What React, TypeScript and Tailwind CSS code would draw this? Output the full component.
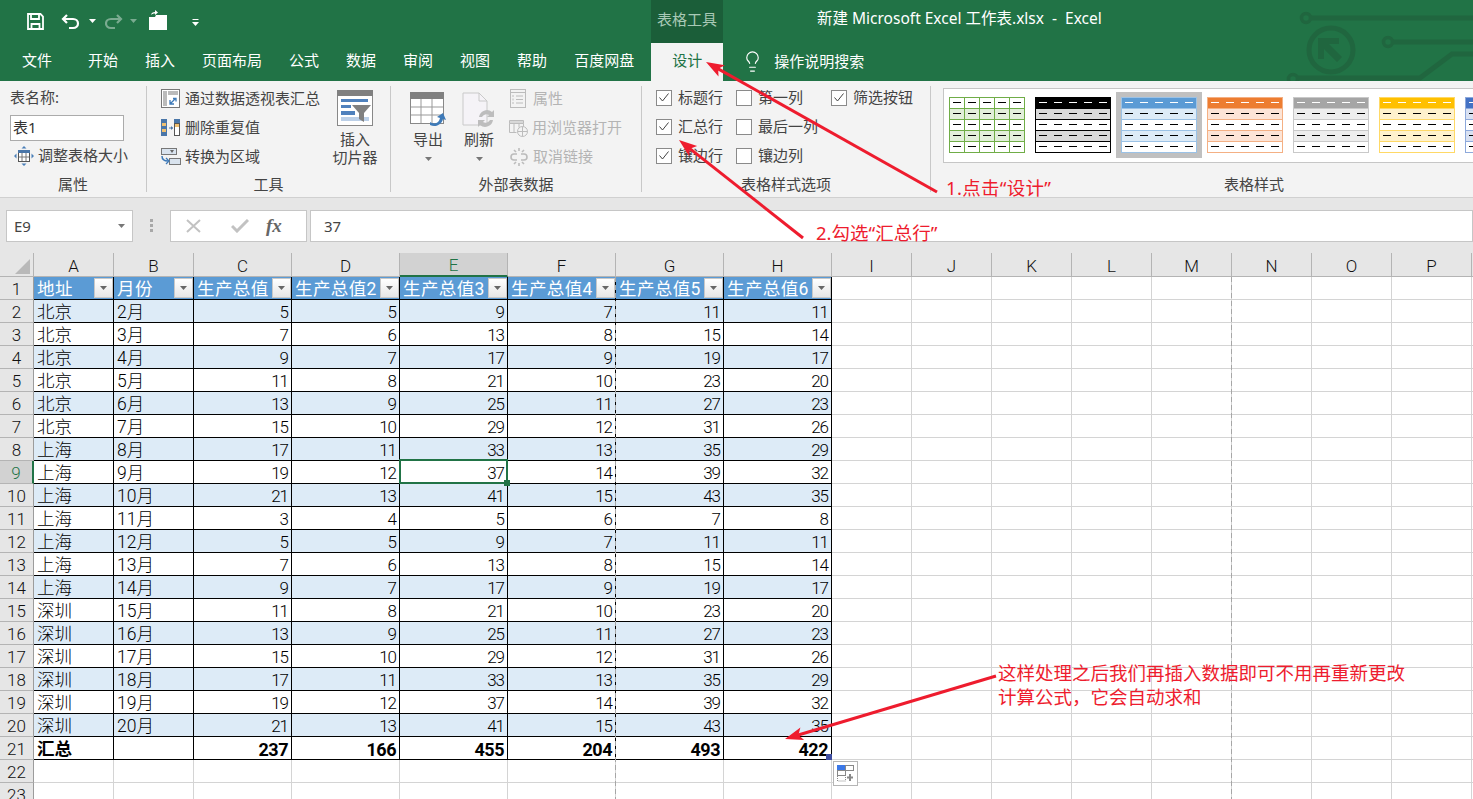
import React from "react";
import { Lightbulb } from "lucide-react";

const cjk = { fontFamily: '"Noto Sans","Noto Sans CJK SC",sans-serif' };
const cellFont = { fontFamily: 'Roboto,"Noto Sans CJK SC",sans-serif' };

const C = [5,7,9,11,13,15,17,19,21,3,5,7,9,11,13,15,17,19,21];
const D = [5,6,7,8,9,10,11,12,13,4,5,6,7,8,9,10,11,12,13];
const E = [9,13,17,21,25,29,33,37,41,5,9,13,17,21,25,29,33,37,41];
const F = [7,8,9,10,11,12,13,14,15,6,7,8,9,10,11,12,13,14,15];
const G = [11,15,19,23,27,31,35,39,43,7,11,15,19,23,27,31,35,39,43];
const H = [11,14,17,20,23,26,29,32,35,8,11,14,17,20,23,26,29,32,35];
const letters = ["A","B","C","D","E","F","G","H","I","J","K","L","M","N","O","P",""];
const blanks = ["i","j","k","l","m","n","o","p","q"];
const allCols = ["a","b","c","d","e","f","g","h",...blanks];
const heads = ["地址","月份","生产总值","生产总值2","生产总值3","生产总值4","生产总值5","生产总值6"];
const totals = ["237","166","455","204","493","422"];
const tabs = ["开始","插入","页面布局","公式","数据","审阅","视图","帮助","百度网盘"];

function Caret({ color = "#fff" }: { color?: string }) {
  return <svg width="7" height="4" viewBox="0 0 7 4"><path d="M0 0h7L3.500 4z" fill={color} /></svg>;
}

function Qat() {
  return (
    <div className="h-[43px] flex items-center pl-[27px]">
      <svg width="17" height="17" viewBox="0 0 17 17" fill="none" stroke="#fff" strokeWidth="1.8">
        <path d="M1 1h12.500L16 3.500V16H1z" /><path d="M4 1v5h8V1" /><path d="M4.500 16v-5h8v5" />
      </svg>
      <svg className="ml-[17px]" width="19" height="16" viewBox="0 0 19 16" fill="none" stroke="#fff" strokeWidth="2.2">
        <path d="M2 5h10c3 0 5 2 5 4.500S15 14 12 14H8" /><path d="M6 1 2 5l4 4" />
      </svg>
      <span className="ml-[9px] mb-[2px] flex"><Caret /></span>
      <svg className="ml-[9px] opacity-40" width="18" height="16" viewBox="0 0 18 16" fill="none" stroke="#fff" strokeWidth="2.2">
        <path d="M16 5H6C3 5 1 7 1 9.500S3 14 6 14h4" /><path d="m12 1 4 4-4 4" />
      </svg>
      <span className="ml-[7px] mb-[2px] flex opacity-40"><Caret /></span>
      <svg className="ml-[11px] -mt-[4px]" width="20" height="20" viewBox="0 0 20 20" fill="#fff">
        <path d="M1 7h6l1-2h11v15H1z" /><path d="M3 5c0-2 2-3 4-3V0l3 2.500L7 5V3.500C5 3.500 4 4 3 5z" />
      </svg>
      <svg className="ml-[24px] mt-[2px]" width="7" height="7" viewBox="0 0 7 7" fill="#fff">
        <rect width="6" height="1" x="0.500" /><path d="M0 3h7L3.500 7z" />
      </svg>
    </div>
  );
}

function TitleBar() {
  return (
    <div className="relative h-[81px] bg-[#217346] text-white overflow-hidden" style={cjk}>
      <svg className="absolute left-[1280px] top-0" width="193" height="81" viewBox="1280 0 193 81" fill="none" stroke="#20663f" strokeWidth="5">
        <circle cx="1306" cy="18" r="4.500" strokeWidth="3.500" /><path d="M1311 18h162" />
        <circle cx="1331" cy="50" r="22" />
        <path d="M1318 38h21v6h-10l13 13-5 5-13-13v10h-6z" fill="#20663f" stroke="none" />
        <circle cx="1388" cy="42" r="4.500" strokeWidth="3.500" /><path d="M1393 42h80" />
        <circle cx="1293" cy="79" r="4.500" strokeWidth="3.500" /><path d="M1298 78h122l32-24h21" />
      </svg>
      <div className="absolute left-[651px] top-0 w-[72px] h-[43px] pb-[4px] bg-[#1b5e39] text-[#a9c9b6] text-[15px] flex items-center justify-center">表格工具</div>
      <div className="absolute left-[817px] top-0 h-[37px] flex items-center text-[15.500px] whitespace-pre">新建 Microsoft Excel 工作表.xlsx  -  Excel</div>
      <Qat />
      <div className="h-[38px] flex items-stretch text-[15px]">
        <div className="ml-[22px] w-[30px] pb-[4px] flex items-center justify-center whitespace-nowrap">文件</div>
        <div className="flex ml-[36px] gap-[27px]">
          {tabs.map((t) => <div key={t} className="flex items-center pb-[4px] whitespace-nowrap">{t}</div>)}
        </div>
        <div className="ml-[17px] w-[72px] pb-[4px] bg-[#f3f3f3] text-[#217346] flex items-center justify-center">设计</div>
        <Lightbulb className="ml-[18px] mb-[2px] self-center" size={23} strokeWidth={1.2} />
        <div className="ml-[10px] pb-[2px] flex items-center whitespace-nowrap">操作说明搜索</div>
      </div>
    </div>
  );
}

function Divider() {
  return <div className="w-px my-[5px] bg-[#c8c8c8] shrink-0" />;
}

function Group({ w, label, children }: { w: string; label: string; children: React.ReactNode }) {
  return (
    <div className={`${w} shrink-0 h-full flex flex-col`}>
      <div className="pt-[2px] h-[94px]">{children}</div>
      <div className="h-[22px] pb-[3px] flex items-center justify-center text-[15px] text-[#444]">{label}</div>
    </div>
  );
}

function PivotIcon() {
  return (
    <svg width="19" height="19" viewBox="0 0 19 19" fill="none">
      <rect x="0.500" y="0.500" width="18" height="18" fill="#fff" stroke="#777" />
      <path d="M2 2h4v15H2zM7 2h10v4H7z" fill="#bbb" />
      <path d="M9 15l5-5M12 9.500h3v3M9 11v4h4" stroke="#3e7ab8" strokeWidth="1.300" />
    </svg>
  );
}
function DupIcon() {
  return (
    <svg width="19" height="18" viewBox="0 0 19 18" fill="none">
      <rect width="6" height="17" fill="#4a76a8" /><rect x="1" y="4" width="4" height="3" fill="#f0c070" /><rect x="1" y="10" width="4" height="3" fill="#f0c070" />
      <rect x="13" width="6" height="4" fill="#4a76a8" /><rect x="13.500" y="4.500" width="5" height="12" fill="#fff" stroke="#555" /><rect x="14" y="5" width="4" height="3" fill="#f0c070" />
      <path d="M8 9h4" stroke="#4a76a8" /><path d="M10 7l2 2-2 2" fill="#4a76a8" />
    </svg>
  );
}
function ConvertIcon() {
  return (
    <svg width="20" height="18" viewBox="0 0 20 18" fill="none">
      <rect x="0.500" y="0.500" width="15" height="6" fill="#d9e3ee" stroke="#777" /><path d="M9 2h4l-2 3z" fill="#666" />
      <rect x="8.500" y="10.500" width="11" height="6" fill="#d9e3ee" stroke="#777" />
      <path d="M1 8c0 4 2 5 6 5" stroke="#3e7ab8" strokeWidth="1.500" /><path d="M5 10l3 3-3 3" stroke="#3e7ab8" strokeWidth="1.300" />
    </svg>
  );
}
function ResizeIcon() {
  return (
    <svg width="20" height="20" viewBox="0 0 20 20" fill="none">
      <rect x="4.500" y="4.500" width="11" height="11" fill="#fff" stroke="#555" />
      <rect x="4" y="4" width="12" height="3" fill="#4a76a8" />
      <path d="M8 7v8M12 7v8M5 11h10" stroke="#777" />
      <path d="M10 0l2.500 2.500h-5zM10 20l2.500-2.500h-5zM0 10l2.500-2.500v5zM20 10l-2.500-2.500v5z" fill="#4a7fb8" />
    </svg>
  );
}
function SlicerIcon() {
  return (
    <svg width="36" height="36" viewBox="0 0 36 36" fill="none">
      <rect x="0.500" y="0.500" width="35" height="35" fill="#fff" stroke="#888" />
      <rect width="36" height="6" fill="#808080" />
      <rect x="4" y="9" width="27" height="3" fill="#4f81bd" /><rect x="4" y="15" width="10" height="3" fill="#4f81bd" />
      <rect x="4" y="21" width="14" height="4" fill="#4f81bd" /><rect x="4" y="27" width="28" height="4" fill="#bcd0e8" />
      <path d="M15 15h19l-7 8v9l-5-3v-6z" fill="#808080" />
    </svg>
  );
}
function ExportIcon() {
  return (
    <svg width="36" height="38" viewBox="0 0 36 38" fill="none">
      <rect x="0.500" y="0.500" width="33" height="31" fill="#fff" stroke="#888" />
      <rect width="34" height="7" fill="#808080" />
      <path d="M11 7v24M22 7v24M1 15h32M1 23h32" stroke="#999" />
      <path d="M20 30c5 3 9 1 10-4l-3-1 6-4 3 7-3-1c-1 5-7 9-13 6z" fill="#3e7ab8" />
    </svg>
  );
}
function RefreshIcon() {
  return (
    <svg width="34" height="38" viewBox="0 0 34 38" fill="none">
      <path d="M1 1h16l8 8v24H1z" fill="#f5f3f7" stroke="#c9c9c9" /><path d="M17 1v8h8" stroke="#c9c9c9" />
      <path d="M17 25a8 8 0 0 1 13-5l2-2v7h-7l2-2a5 5 0 0 0-7 2zM31 28a8 8 0 0 1-13 5l-2 2v-7h7l-2 2a5 5 0 0 0 7-2z" fill="#bdbdbd" />
    </svg>
  );
}
function PropIcon() {
  return (
    <svg width="16" height="19" viewBox="0 0 16 19" fill="none" stroke="#bcbcbc">
      <rect x="0.500" y="0.500" width="15" height="18" /><path d="M0 3.500h16M6 7h7M6 10.500h7M6 14h7M3 6v2M3 9.500v2M3 13v2" />
    </svg>
  );
}
function BrowserIcon() {
  return (
    <svg width="19" height="18" viewBox="0 0 19 18" fill="none" stroke="#bcbcbc">
      <path d="M0.500 3h14M0.500 1.500h14v3h-14zM0.500 4.500v9h7M5 4.500v9M10 4.500v4M14.500 4.500v3" />
      <circle cx="13.500" cy="12.500" r="5" /><path d="M8.500 12.500h10M13.500 7.500v10" />
    </svg>
  );
}
function UnlinkIcon() {
  return (
    <svg width="18" height="18" viewBox="0 0 18 18" fill="none" stroke="#bcbcbc" strokeWidth="1.600">
      <path d="M7 6H4a3 3 0 0 0 0 6h3M11 6h3a3 3 0 0 1 0 6h-3M9 0v3M9 15v3M4 2l2 2M14 2l-2 2M4 16l2-2M14 16l-2-2" />
    </svg>
  );
}

function Check({ on, label }: { on: boolean; label: string }) {
  return (
    <div className="h-[29px] flex items-center">
      <div className="w-[16px] h-[16px] bg-white border border-[#8a8a8a] flex items-center justify-center shrink-0">
        {on && <svg width="10" height="9" viewBox="0 0 10 9" fill="none" stroke="#444"><path d="M0.500 4.500 3.500 8 9.500 0.500" /></svg>}
      </div>
      <span className="ml-[6px] whitespace-nowrap">{label}</span>
    </div>
  );
}

function Thumb({ head, band, line, grid, ring }: { head: string; band: string; line: string; grid?: boolean; ring?: boolean }) {
  const rows = [0, 1, 2, 3, 4];
  const cols = [0, 1, 2, 3, 4];
  return (
    <div className={`shrink-0 w-[76px] h-[56px] ${ring ? "ring-[5px] ring-[#c0c0c0]" : ""}`}>
      <svg width="76" height="56" viewBox="0 0 76 56" className="block">
        {rows.map((r) => (
          <rect key={r} x="0" y={r * 11} width="76" height="11.200" fill={r === 0 ? head : r % 2 === 1 ? band : "#fff"} />
        ))}
        {rows.slice(1).map((r) => <path key={r} d={`M0 ${r * 11 + 0.5}h76`} stroke={line} />)}
        {grid && [1, 2, 3, 4].map((c) => <path key={c} d={`M${c * 15 + 0.5} 0v56`} stroke={line} />)}
        <rect x="0.500" y="0.500" width="75" height="55" fill="none" stroke={line} />
        {rows.map((r) => cols.map((c) => (
          <path key={c} d={`M${4 + c * 15} ${r * 11 + 5.5}h8`} stroke={r === 0 && !grid ? "#fff" : "#000"} />
        )))}
      </svg>
    </div>
  );
}

function Ribbon() {
  return (
    <div className="h-[116px] flex bg-[#f3f3f3] text-[15px] text-[#444]" style={cjk}>
      <Group w="w-[146px]" label="属性">
        <div className="pl-[10px]">
          <div className="h-[29px] flex items-center">表名称:</div>
          <div className="h-[29px] flex items-center pt-[2px]">
            <div className="w-[114px] h-[26px] bg-white border border-[#ababab] flex items-center pl-[2px] text-[15px] text-[#333]">表1</div>
          </div>
          <div className="h-[29px] flex items-center pl-[4px] gap-[4px] whitespace-nowrap"><ResizeIcon />调整表格大小</div>
        </div>
      </Group>
      <Divider />
      <Group w="w-[243px]" label="工具">
        <div className="flex">
          <div className="w-[185px] pl-[14px] pt-px shrink-0">
            <div className="h-[29px] flex items-center gap-[5px] whitespace-nowrap"><PivotIcon />通过数据透视表汇总</div>
            <div className="h-[29px] flex items-center gap-[5px] whitespace-nowrap"><DupIcon />删除重复值</div>
            <div className="h-[29px] flex items-center gap-[4px] whitespace-nowrap"><ConvertIcon />转换为区域</div>
          </div>
          <div className="w-[46px] flex flex-col items-center pt-[7px] leading-[18px] whitespace-nowrap">
            <SlicerIcon />
            <span className="mt-[4px]">插入</span>
            <span>切片器</span>
          </div>
        </div>
      </Group>
      <Divider />
      <Group w="w-[250px]" label="外部表数据">
        <div className="flex">
          <div className="w-[72px] flex flex-col items-center pt-[9px] pl-[2px]">
            <ExportIcon />
            <span className="leading-[18px]">导出</span>
            <span className="mt-[9px] flex"><Caret color="#777" /></span>
          </div>
          <div className="w-[32px] flex flex-col items-center pt-[9px]">
            <RefreshIcon />
            <span className="leading-[18px] whitespace-nowrap">刷新</span>
            <span className="mt-[9px] flex"><Caret color="#777" /></span>
          </div>
          <div className="pl-[15px] pt-px text-[#b4b4b4]">
            <div className="h-[29px] flex items-center gap-[7px] whitespace-nowrap"><PropIcon />属性</div>
            <div className="h-[29px] flex items-center gap-[4px] -ml-px whitespace-nowrap"><BrowserIcon />用浏览器打开</div>
            <div className="h-[29px] flex items-center gap-[5px] whitespace-nowrap"><UnlinkIcon />取消链接</div>
          </div>
        </div>
      </Group>
      <Divider />
      <Group w="w-[288px]" label="表格样式选项">
        <div className="pl-[14px] grid grid-cols-[80px_95px_1fr]">
          <Check on label="标题行" />
          <Check on={false} label="第一列" />
          <Check on label="筛选按钮" />
          <Check on label="汇总行" />
          <Check on={false} label="最后一列" />
          <div />
          <Check on label="镶边行" />
          <Check on={false} label="镶边列" />
        </div>
      </Group>
      <Divider />
      <div className="w-[542px] shrink-0 h-full flex flex-col overflow-hidden">
        <div className="pt-[7px] pl-[12px] h-[94px]">
          <div className="w-[600px] h-[75px] bg-white border border-[#c6c6c6] flex gap-[10px] pl-[5px] pt-[8px]">
            <Thumb head="#ffffff" band="#e2efda" line="#70ad47" grid />
            <Thumb head="#000000" band="#d9d9d9" line="#000000" />
            <Thumb head="#5b9bd5" band="#ddebf7" line="#9bc2e6" ring />
            <Thumb head="#ed7d31" band="#fce4d6" line="#f4b084" />
            <Thumb head="#a5a5a5" band="#ededed" line="#c9c9c9" />
            <Thumb head="#ffc000" band="#fff2cc" line="#ffd966" />
            <Thumb head="#4472c4" band="#d9e1f2" line="#8ea9db" />
          </div>
        </div>
        <div className="h-[22px] pb-[3px] flex items-center justify-center text-[15px] pl-[104px]">表格样式</div>
      </div>
    </div>
  );
}

function FormulaBar() {
  return (
    <div className="h-[56px] bg-[#e6e6e6] border-t border-[#d0d0d0] pt-[12px] flex" style={cjk}>
      <div className="ml-[6px] w-[127px] h-[32px] bg-white border border-[#c6c6c6] flex items-center justify-between px-[7px] text-[15px] text-[#444]">
        <span>E9</span><span className="flex"><Caret color="#777" /></span>
      </div>
      <div className="w-[37px] h-[32px] flex items-center justify-center">
        <svg width="4" height="14" viewBox="0 0 4 14" fill="#a8a8a8"><rect y="0" width="3" height="3" /><rect y="5" width="3" height="3" /><rect y="10" width="3" height="3" /></svg>
      </div>
      <div className="w-[137px] h-[32px] bg-white border border-[#c6c6c6] flex items-center pl-[15px]">
        <svg width="16" height="14" viewBox="0 0 16 14" fill="none" stroke="#c2c2c2" strokeWidth="2"><path d="M1 1l13 12M14 1 1 13" /></svg>
        <svg className="ml-[29px]" width="18" height="14" viewBox="0 0 18 14" fill="none" stroke="#c2c2c2" strokeWidth="3"><path d="M1 7l5 5L17 1" /></svg>
        <span className="ml-[17px] text-[19px] italic font-bold text-[#666]" style={{ fontFamily: '"Liberation Serif",serif' }}>fx</span>
      </div>
      <div className="ml-[3px] flex-1 h-[32px] bg-white border border-[#c6c6c6] flex items-center pl-[13px] text-[15px] text-[#444]">37</div>
    </div>
  );
}

function ColHead({ letter }: { letter: string }) {
  const selected = letter === "E";
  return (
    <div className={`h-[24px] flex items-center justify-center border-r border-[#b4b4b4] pt-[4px] text-[17px] font-light ${selected ? "bg-[#d2d2d2] text-[#217346] border-b-2 border-b-[#217346]" : "text-[#111] border-b border-b-[#b4b4b4]"}`}>
      {letter}
    </div>
  );
}

function RowHead({ n }: { n: number }) {
  return (
    <div className={`h-[23px] flex items-center justify-center border-b border-[#b4b4b4] pt-[3px] text-[17px] font-light overflow-hidden ${n === 9 ? "bg-[#d2d2d2] text-[#217346] border-r-2 border-r-[#217346]" : "bg-[#e6e6e6] text-[#111] border-r border-r-[#9c9c9c]"}`}>
      {n}
    </div>
  );
}

function TableCell({ n, col, value }: { n: number; col: number; value: string | number }) {
  const band = n % 2 === 0 ? "bg-[#ddebf7]" : "bg-white";
  const isSel = n === 9 && col === 4;
  const left = col < 2;
  return (
    <div className={`relative h-[23px] border-r border-b border-black flex items-center pt-[3px] font-light text-black ${band} ${left ? "justify-start pl-[3px] text-[17.500px]" : "justify-end pr-[3px] text-[17px] tracking-[-1px]"}`}>
      {value}
      {isSel && (
        <div className="absolute left-[-1px] right-[-1px] top-[-2px] bottom-[-1px] border-2 border-[#217346] z-10">
          <div className="absolute right-[-4px] bottom-[-4px] w-[6px] h-[6px] bg-[#217346]" />
        </div>
      )}
    </div>
  );
}

function Sheet() {
  const rows = Array.from({ length: 19 }, (_, k) => k);
  return (
    <div className="grid grid-cols-[34px_80px_80px_98px_108px_108px_108px_108px_108px_80px_80px_80px_80px_80px_80px_80px_80px_80px] bg-white" style={cellFont}>
      <div className="h-[24px] bg-[#e6e6e6] border-r border-b border-[#b4b4b4] flex items-end justify-end pr-[3px] pb-[2px]">
        <svg width="15" height="15" viewBox="0 0 15 15"><path d="M15 0v15H0z" fill="#b9b9b9" /></svg>
      </div>
      {letters.map((l, i) => (
        <div key={i} className="bg-[#e6e6e6]"><ColHead letter={l} /></div>
      ))}

      <RowHead n={1} />
      {heads.map((h) => (
        <div key={h} className="relative h-[23px] bg-[#5b9bd5] border-r border-b border-black flex items-center pl-[3px] pt-[3px] text-[17.500px] tracking-[0.4px] text-white whitespace-nowrap overflow-hidden">
          {h}
          <div className="absolute right-0 top-[1px] w-[19px] h-[20px] bg-gradient-to-b from-white to-[#e6e6e6] border border-[#c8c8c8] flex items-center justify-center">
            <Caret color="#666" />
          </div>
        </div>
      ))}
      {blanks.map((l) => <div key={l} className="h-[23px] border-r border-b border-[#d4d4d4]" />)}

      {rows.map((k) => {
        const n = k + 2;
        const addr = n <= 7 ? "北京" : n <= 14 ? "上海" : "深圳";
        const vals: (string | number)[] = [addr, `${n}月`, C[k], D[k], E[k], F[k], G[k], H[k]];
        return (
          <React.Fragment key={n}>
            <RowHead n={n} />
            {vals.map((v, c) => <TableCell key={c} n={n} col={c} value={v} />)}
            {blanks.map((l) => <div key={l} className="h-[23px] border-r border-b border-[#d4d4d4]" />)}
          </React.Fragment>
        );
      })}

      <RowHead n={21} />
      <div className="h-[23px] border-r border-b border-black flex items-center pl-[3px] pt-[3px] text-[17.500px] font-bold text-black">汇总</div>
      <div className="h-[23px] border-r border-b border-black" />
      {totals.map((t, i) => (
        <div key={t} className="relative h-[23px] border-r border-b border-black flex items-center justify-end pr-[3px] pt-[3px] text-[18px] tracking-[-0.500px] font-bold text-black">
          {t}
          {i === 5 && (
            <>
              <div className="absolute right-[-1px] bottom-[-1px] w-[6px] h-[6px] bg-[#3f4ea0]" />
              <div className="absolute left-[109px] top-[24px] w-[25px] h-[25px] bg-white border border-[#b5b5b5] z-10 flex items-center justify-center">
                <svg width="17" height="17" viewBox="0 0 17 17" fill="none">
                  <rect x="0.500" y="0.500" width="8" height="5" fill="#3b78e7" stroke="#3b78e7" />
                  <rect x="8.500" y="0.500" width="8" height="5" stroke="#888" />
                  <rect x="0.500" y="5.500" width="8" height="5" stroke="#888" />
                  <path d="M0.500 11v5h8v-5" stroke="#888" strokeDasharray="1 1" />
                  <path d="M13 9v7M10 12.500h6" stroke="#888" strokeWidth="2" />
                </svg>
              </div>
            </>
          )}
        </div>
      ))}
      {blanks.map((l) => <div key={l} className="h-[23px] border-r border-b border-[#d4d4d4]" />)}

      {[22, 23].map((n) => (
        <React.Fragment key={n}>
          <RowHead n={n} />
          {allCols.map((l) => <div key={l} className="h-[23px] border-r border-b border-[#d4d4d4]" />)}
        </React.Fragment>
      ))}
    </div>
  );
}

function Arrow({ x1, y1, x2, y2 }: { x1: number; y1: number; x2: number; y2: number }) {
  const a = Math.atan2(y2 - y1, x2 - x1);
  const len = 18;
  const w = 6.5;
  const bx = x2 - Math.cos(a) * len;
  const by = y2 - Math.sin(a) * len;
  const px = -Math.sin(a);
  const py = Math.cos(a);
  const pts = [`${x2},${y2}`, `${bx + px * w},${by + py * w}`, `${bx + Math.cos(a) * 4},${by + Math.sin(a) * 4}`, `${bx - px * w},${by - py * w}`].join(" ");
  return (
    <g>
      <line x1={x1} y1={y1} x2={bx + Math.cos(a) * 5} y2={by + Math.sin(a) * 5} stroke="#ee1c2e" strokeWidth="3" />
      <polygon points={pts} fill="#ee1c2e" />
    </g>
  );
}

function Overlay() {
  return (
    <>
      <svg className="absolute left-0 top-0 pointer-events-none z-20" width="1473" height="799" viewBox="0 0 1473 799">
        <path d="M615.500 277V799M1231.500 277V799" stroke="#a6a6a6" strokeDasharray="5 3" fill="none" />
        <Arrow x1={937} y1={192} x2={706} y2={62} />
        <Arrow x1={803} y1={238} x2={679} y2={140} />
        <Arrow x1={996} y1={676} x2={785} y2={739} />
      </svg>
      <div className="absolute left-[946px] top-[175px] z-30 text-[18.500px] tracking-[0.300px] leading-[26px] text-[#ee1c2e] whitespace-nowrap" style={cjk}>1.点击“设计”</div>
      <div className="absolute left-[816px] top-[220px] z-30 text-[18.500px] leading-[26px] text-[#ee1c2e] whitespace-nowrap" style={cjk}>2.勾选“汇总行”</div>
      <div className="absolute left-[998px] top-[661px] z-30 text-[18.500px] leading-[24px] text-[#ee1c2e] whitespace-nowrap" style={cjk}>
        这样处理之后我们再插入数据即可不用再重新更改<br />计算公式，它会自动求和
      </div>
    </>
  );
}

export default function App() {
  return (
    <div className="relative w-[1473px] h-[799px] overflow-hidden bg-white">
      <TitleBar />
      <Ribbon />
      <FormulaBar />
      <Sheet />
      <Overlay />
    </div>
  );
}
